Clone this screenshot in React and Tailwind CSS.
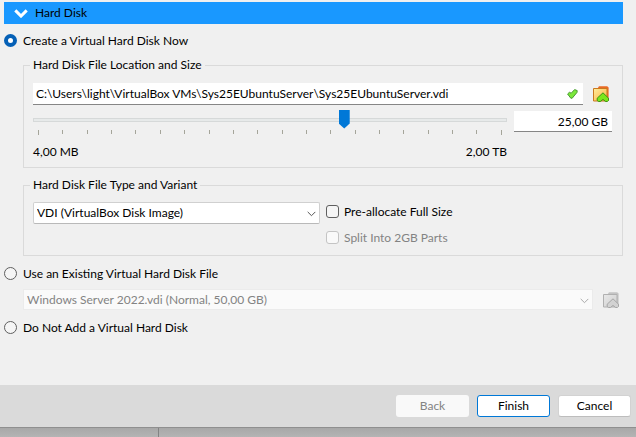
import React from 'react';

const TICKS = Array.from({ length: 20 }, (_, i) => i);

function Chevron({ className }) {
  return (
    <svg viewBox="0 0 9 6" className={className} fill="none" stroke="currentColor" aria-hidden="true">
      <path d="M0.7 0.9 L4.5 4.7 L8.3 0.9" />
    </svg>
  );
}

function FolderIcon({ disabled }) {
  const c = disabled
    ? { back: '#c4c4c4', edge: '#b0b0b0', top: '#e8e8e8', low: '#cfcfcf', arrow: '#d2d2d2', line: '#a6a6a6', id: 'fold-off' }
    : { back: '#ea6a24', edge: '#c9781f', top: '#ffee9c', low: '#fbb040', arrow: '#7be61c', line: '#3c9414', id: 'fold-on' };
  return (
    <svg viewBox="0 0 16 16" className="size-4" aria-hidden="true">
      <defs>
        <linearGradient id={c.id} x1="0" y1="0" x2="1" y2="1">
          <stop offset="0" stopColor={c.top} />
          <stop offset="1" stopColor={c.low} />
        </linearGradient>
      </defs>
      <path d="M4.5 2.5 L6 0.3 H14.2 L15.6 1.6 V15 H4.5 Z" fill={c.back} />
      <path d="M0.5 2.5 H14 V15 H0.5 Z" fill={`url(#${c.id})`} stroke={c.edge} />
      <path
        d="M10 6.8 L15.5 12.2 V14.4 L14.4 15.5 H12.6 L10 13.4 L7.4 15.5 H5.4 L4.2 14.4 V12.2 Z"
        fill={c.arrow}
        stroke={c.line}
        strokeLinejoin="round"
      />
    </svg>
  );
}

function CheckIcon() {
  return (
    <svg viewBox="0 0 11 10" className="h-[10px] w-[11px]" aria-hidden="true">
      <path
        d="M0.6 5 L2.4 3.3 L4.2 4.2 L7.6 0.6 L10.2 1.6 L10 3.4 L5.2 9.2 L3.8 9.2 Z"
        fill="#7be83a"
        stroke="#4a9a34"
        strokeLinejoin="round"
      />
    </svg>
  );
}

function Radio({ label, defaultChecked }) {
  return (
    <label className="flex h-4 items-center gap-[6px]">
      <input
        type="radio"
        name="disk-source"
        defaultChecked={defaultChecked}
        className="-mt-px size-[13px] appearance-none rounded-full border border-[#5f5f5f] bg-[#f5f5f5] checked:border-4 checked:border-[#0560b6] checked:bg-white"
      />
      {label}
    </label>
  );
}

function Check({ label, disabled }) {
  return (
    <label className={`flex h-4 items-center gap-[5px] ${disabled ? 'text-[#838383]' : ''}`}>
      <input
        type="checkbox"
        disabled={disabled}
        className="-mt-px size-[13px] appearance-none rounded-[3px] border border-[#5f5f5f] bg-[#f5f5f5] disabled:border-[#c4c4c4] disabled:bg-[#f9f9f9]"
      />
      {label}
    </label>
  );
}

function Group({ title, children, className }) {
  return (
    <fieldset className={`ml-[19px] min-w-0 border border-[#dadada] px-[6px] ${className}`}>
      <legend className="h-4 px-[3px]">{title}</legend>
      <div className="px-[3px]">{children}</div>
    </fieldset>
  );
}

export default function App() {
  return (
    <div className="flex min-h-screen flex-col bg-[#f0f0f0] font-[Lato,'Noto_Sans',sans-serif] text-[12px] leading-4 text-black">
      <main className="pt-[2px] pr-[13px] pb-[49px] pl-1">
        <button type="button" className="flex h-[22px] w-full items-center gap-[7px] bg-[#1998ff] pl-[10px]">
          <Chevron className="h-[9px] w-[14px] stroke-2 text-white" />
          <span>Hard Disk</span>
        </button>

        <div className="mt-[9px]">
          <Radio label="Create a Virtual Hard Disk Now" defaultChecked />
        </div>

        <Group title="Hard Disk File Location and Size" className="mt-2 pt-[10px] pb-[7px]">
          <div className="flex items-center">
            <div className="flex h-[22px] min-w-0 flex-1 items-center border-b border-[#868686] bg-white pr-[5px]">
              <input
                type="text"
                aria-label="Hard disk file location"
                defaultValue="C:\Users\light\VirtualBox VMs\Sys25EUbuntuServer\Sys25EUbuntuServer.vdi"
                className="min-w-0 flex-1 bg-transparent pl-[3px] outline-none"
              />
              <CheckIcon />
            </div>
            <button type="button" aria-label="Choose a location" className="mr-1 ml-[10px]">
              <FolderIcon />
            </button>
          </div>
          <div className="mt-[5px] flex gap-[7px]">
            <div className="min-w-0 flex-1">
              <input
                type="range"
                aria-label="Hard disk size"
                min="0"
                max="1000"
                defaultValue="661"
                className="block h-[19px] w-full appearance-none bg-transparent [&::-webkit-slider-runnable-track]:h-1 [&::-webkit-slider-runnable-track]:border [&::-webkit-slider-runnable-track]:border-[#d6d9d9] [&::-webkit-slider-runnable-track]:bg-[#e7eaea] [&::-webkit-slider-thumb]:-mt-[9px] [&::-webkit-slider-thumb]:h-[19px] [&::-webkit-slider-thumb]:w-[11px] [&::-webkit-slider-thumb]:appearance-none [&::-webkit-slider-thumb]:bg-[#0078d7] [&::-webkit-slider-thumb]:[clip-path:polygon(0_0,100%_0,100%_74%,50%_100%,0_74%)]"
              />
              <div className="mt-px flex justify-between px-[5px]">
                {TICKS.map((i) => (
                  <span key={i} className="h-1 w-px bg-[#a5a59a] first:h-[5px] last:h-[5px]" />
                ))}
              </div>
              <div className="mt-[9px] flex justify-between">
                <span>4,00 MB</span>
                <span>2,00 TB</span>
              </div>
            </div>
            <input
              type="text"
              aria-label="Size"
              defaultValue="25,00 GB"
              className="mt-px mr-px h-[21px] w-[98px] border-b border-[#868686] bg-white pr-1 text-right outline-none"
            />
          </div>
        </Group>

        <Group title="Hard Disk File Type and Variant" className="mt-[9px] pt-[9px] pb-[9px]">
          <div className="flex gap-[6px]">
            <div className="relative h-[22px] w-[287px]">
              <select
                aria-label="Hard disk file type"
                className="block h-[22px] w-full appearance-none rounded-[2px] border border-[#d0d0d0] border-b-[#b9b9b9] bg-white pl-[3px]"
              >
                <option>VDI (VirtualBox Disk Image)</option>
              </select>
              <Chevron className="pointer-events-none absolute top-[9px] right-1 h-[6px] w-[9px] text-[#555]" />
            </div>
            <div className="flex flex-col gap-[10px] pt-[2px]">
              <Check label="Pre-allocate Full Size" />
              <Check label="Split Into 2GB Parts" disabled />
            </div>
          </div>
        </Group>

        <div className="mt-[10px]">
          <Radio label="Use an Existing Virtual Hard Disk File" />
        </div>
        <div className="mt-[7px] ml-[19px] flex items-center">
          <div className="relative min-w-0 flex-1">
            <select
              disabled
              aria-label="Existing virtual hard disk file"
              className="block h-[21px] w-full appearance-none border border-[#ebebeb] bg-[#fafafa] pl-[3px] text-[#838383] opacity-100"
            >
              <option>Windows Server 2022.vdi (Normal, 50,00 GB)</option>
            </select>
            <Chevron className="pointer-events-none absolute top-[9px] right-1 h-[6px] w-[9px] text-[#a9a9a9]" />
          </div>
          <button type="button" disabled aria-label="Choose a disk file" className="mr-1 ml-[10px]">
            <FolderIcon disabled />
          </button>
        </div>
        <div className="mt-[10px]">
          <Radio label="Do Not Add a Virtual Hard Disk" />
        </div>
      </main>

      <footer className="flex justify-end gap-2 border-b border-[#8f8f8f] bg-[#dadada] pt-[10px] pr-[5px] pb-[10px]">
        <button type="button" disabled className="h-[22px] w-[73px] rounded-[3px] bg-[#f9f9f9] text-[#838383]">
          Back
        </button>
        <button type="button" className="h-[22px] w-[73px] rounded-[3px] border border-[#0078d7] bg-white">
          Finish
        </button>
        <button type="button" className="h-[22px] w-[73px] rounded-[3px] border border-[#d2d2d2] border-b-[#bdbdbd] bg-white">
          Cancel
        </button>
      </footer>
      <div className="flex min-h-2 flex-1 bg-linear-to-b from-[#a8a8a8] to-[#b4b4b4]">
        <div className="w-1/4 border-r border-[#838383]" />
      </div>
    </div>
  );
}
